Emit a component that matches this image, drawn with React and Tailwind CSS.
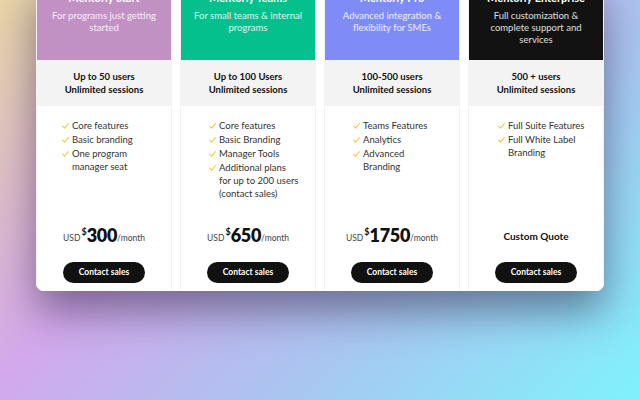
import React from "react";

const plans = [
  {
    name: "Mentorly Start",
    desc: ["For programs just getting", "started"],
    head: "bg-[#c291c4]",
    pl: "pl-[25px]",
    users: "Up to 50 users",
    features: [["Core features"], ["Basic branding"], ["One program", "manager seat"]],
    price: "300",
  },
  {
    name: "Mentorly Teams",
    desc: ["For small teams & internal", "programs"],
    head: "bg-[#03c08c]",
    pl: "pl-[28px]",
    users: "Up to 100 Users",
    features: [
      ["Core features"],
      ["Basic Branding"],
      ["Manager Tools"],
      ["Additional plans", "for up to 200 users", "(contact sales)"],
    ],
    price: "650",
  },
  {
    name: "Mentorly Pro",
    desc: ["Advanced integration &", "flexibility for SMEs"],
    head: "bg-[#7f8cf8]",
    pl: "pl-[28px]",
    users: "100-500 users",
    features: [["Teams Features"], ["Analytics"], ["Advanced", "Branding"]],
    price: "1750",
  },
  {
    name: "Mentorly Enterprise",
    desc: ["Full customization &", "complete support and", "services"],
    head: "bg-[#121212]",
    pl: "pl-[29px]",
    users: "500 + users",
    features: [["Full Suite Features"], ["Full White Label", "Branding"]],
    price: null,
  },
];

function Check() {
  return (
    <svg width="7" height="6" viewBox="0 0 7 6" className="mt-[4px] shrink-0">
      <path d="M0.6 3.2 L2.6 5.2 L6.4 0.6" fill="none" stroke="#f6c945" strokeWidth="1.1" strokeLinecap="round" strokeLinejoin="round" />
    </svg>
  );
}

function Column({ p }) {
  return (
    <div className="flex flex-col border-x border-[#f3f3f3] bg-white">
      <div className={`${p.head} h-[80px] flex flex-col items-center pt-[11px] text-center`}>
        <div className="text-white font-bold text-[11px] leading-[14px]">{p.name}</div>
        <div className="text-white/85 text-[9.5px] leading-[12px] mt-[5px]">
          {p.desc.map((d, i) => (
            <div key={i}>{d}</div>
          ))}
        </div>
      </div>
      <div className="bg-[#f3f3f3] h-[46px] flex flex-col items-center justify-center text-center text-[#111] font-bold text-[9.5px] leading-[13px]">
        <div>{p.users}</div>
        <div>Unlimited sessions</div>
      </div>
      <div className="flex-1 flex flex-col">
        <ul className={`${p.pl} pt-[13px] h-[112px] flex flex-col gap-[1px]`}>
          {p.features.map((f, i) => (
            <li key={i} className="flex gap-[3px] text-[#333] text-[9.5px] leading-[13px]">
              <Check />
              <div>
                {f.map((l, j) => (
                  <div key={j}>{l}</div>
                ))}
              </div>
            </li>
          ))}
        </ul>
        <div className="h-[26px] flex items-end justify-center">
          {p.price ? (
            <div className="flex items-end text-[#111]">
              <span className="text-[8.5px] leading-[10px] text-[#444] mb-[1px] mr-[1px]">USD</span>
              <span className="self-start text-[9px] font-bold leading-[10px] mt-[1px]">$</span>
              <span className="text-[18px] font-extrabold leading-[18px] tracking-[-0.3px]">{p.price}</span>
              <span className="text-[8.5px] leading-[10px] text-[#444] mb-[1px]">/month</span>
            </div>
          ) : (
            <div className="text-[10px] font-bold text-[#111] leading-[12px] mb-[2px]">Custom Quote</div>
          )}
        </div>
        <div className="flex justify-center pt-[18px] pb-[8px]">
          <button className="w-[82px] h-[21px] rounded-full bg-[#111] text-white text-[8.5px] font-bold">
            Contact sales
          </button>
        </div>
      </div>
    </div>
  );
}

export default function App() {
  return (
    <div
      className="w-[640px] h-[400px] overflow-hidden bg-[linear-gradient(135deg,#e9d6a6_0%,#d3a8ec_36%,#a9c6f1_66%,#7ff2fc_100%)]"
      style={{ fontFamily: "Lato, 'Open Sans', sans-serif" }}
    >
      <div className="mx-[36px] -mt-[20px] bg-white rounded-[8px] overflow-hidden grid grid-cols-4 gap-[8px] shadow-[0_20px_40px_rgba(40,30,60,0.5)]">
        {plans.map((p) => (
          <Column key={p.name} p={p} />
        ))}
      </div>
    </div>
  );
}
